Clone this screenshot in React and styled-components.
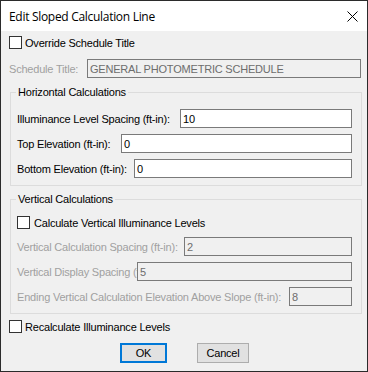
import React from 'react';
import styled, { createGlobalStyle } from 'styled-components';

const Global = createGlobalStyle`
  html, body { margin: 0; padding: 0; background: #f0f0f0; }
  body { font-family: "Liberation Sans", Arial, sans-serif; }
`;

const Window = styled.div`
  box-sizing: border-box;
  width: 368px;
  height: 372px;
  border: 1px solid #2b2b2b;
  background: #f0f0f0;
  display: flex;
  flex-direction: column;
  font-family: "Liberation Sans", Arial, sans-serif;
  font-size: 11px;
  letter-spacing: -0.2px;
  color: #000;
  overflow: hidden;
`;

const TitleBar = styled.div`
  flex: none;
  height: 30px;
  background: #fff;
  display: flex;
  align-items: center;
  justify-content: space-between;
  padding-left: 8px;
`;

const Title = styled.div`
  font-family: "Open Sans", "Noto Sans", sans-serif;
  font-size: 12px;
  letter-spacing: -0.3px;
  color: #000;
`;

const CloseButton = styled.div`
  width: 30px;
  height: 30px;
  display: flex;
  align-items: center;
  justify-content: center;
`;

const Body = styled.div`
  display: flex;
  flex-direction: column;
  padding: 0 5px 0 8px;
`;

const CheckRow = styled.label`
  display: flex;
  align-items: center;
  gap: ${p => p.$gap ?? 3}px;
  height: 13px;
  margin-top: ${p => p.$mt ?? 0}px;
  margin-bottom: ${p => p.$mb ?? 0}px;
  white-space: nowrap;
`;

const Box = styled.span`
  box-sizing: border-box;
  flex: none;
  width: 13px;
  height: 13px;
  border: 1px solid #333;
  background: #fff;
`;

const FieldRow = styled.div`
  display: flex;
  align-items: center;
  height: 19px;
  margin-top: ${p => p.$mt ?? 0}px;
`;

const Label = styled.span`
  flex: none;
  width: ${p => p.$w}px;
  white-space: nowrap;
  color: ${p => (p.$disabled ? '#a0a0a0' : '#000')};
`;

const Input = styled.input`
  box-sizing: border-box;
  flex: 1;
  min-width: 0;
  height: 19px;
  margin: 0 ${p => p.$mr ?? 0}px 0 0;
  padding: 0 0 0 2px;
  border: 1px solid #7a7a7a;
  border-radius: 0;
  outline: none;
  background: ${p => (p.$disabled ? '#f0f0f0' : '#fff')};
  color: ${p => (p.$disabled ? '#6d6d6d' : '#000')};
  font: inherit;
  letter-spacing: inherit;
`;

const Group = styled.fieldset`
  display: flex;
  flex-direction: column;
  gap: 6px;
  min-width: 0;
  margin: ${p => p.$mt}px 0 0 1px;
  padding: 10px 9px 7px 6px;
  border: 1px solid #dcdcdc;
`;

const Legend = styled.legend`
  height: 13px;
  line-height: 13px;
  padding: 0 2px;
  margin-left: -1px;
  color: #000;
`;

const ButtonRow = styled.div`
  display: flex;
  justify-content: center;
  gap: 30px;
  margin: 10px 2px 0 0;
`;

const Button = styled.button`
  box-sizing: border-box;
  width: ${p => p.$w}px;
  height: 20px;
  padding: 0;
  background: #e1e1e1;
  border: ${p => (p.$primary ? '2px solid #0078d7' : '1px solid #adadad')};
  border-radius: 0;
  color: #000;
  font: inherit;
  letter-spacing: inherit;
`;

const CloseIcon = () => (
  <svg width="11" height="11" viewBox="0 0 11 11">
    <path d="M0.5 0.5 L10.5 10.5 M10.5 0.5 L0.5 10.5" stroke="#000" strokeWidth="1" fill="none" />
  </svg>
);

export default function App() {
  return (
    <>
      <Global />
      <Window>
        <TitleBar>
          <Title>Edit Sloped Calculation Line</Title>
          <CloseButton><CloseIcon /></CloseButton>
        </TitleBar>
        <Body>
          <CheckRow $mt={5}><Box />Override Schedule Title</CheckRow>
          <FieldRow $mt={10}>
            <Label $w={78} $disabled>Schedule Title:</Label>
            <Input $disabled $mr={1} readOnly value="GENERAL PHOTOMETRIC SCHEDULE" />
          </FieldRow>

          <Group $mt={8}>
            <Legend>Horizontal Calculations</Legend>
            <FieldRow>
              <Label $w={163}>Illuminance Level Spacing (ft-in):</Label>
              <Input readOnly value="10" />
            </FieldRow>
            <FieldRow>
              <Label $w={104}>Top Elevation (ft-in):</Label>
              <Input readOnly value="0" />
            </FieldRow>
            <FieldRow>
              <Label $w={117}>Bottom Elevation (ft-in):</Label>
              <Input readOnly value="0" />
            </FieldRow>
          </Group>

          <Group $mt={7}>
            <Legend>Vertical Calculations</Legend>
            <CheckRow $gap={4} $mb={2}><Box />Calculate Vertical Illuminance Levels</CheckRow>
            <FieldRow>
              <Label $w={167} $disabled>Vertical Calculation Spacing (ft-in):</Label>
              <Input $disabled readOnly value="2" />
            </FieldRow>
            <FieldRow>
              <Label $w={120} $disabled>Vertical Display Spacing (ft-in):</Label>
              <Input $disabled readOnly value="5" />
            </FieldRow>
            <FieldRow>
              <Label $w={272} $disabled>Ending Vertical Calculation Elevation Above Slope (ft-in):</Label>
              <Input $disabled readOnly value="8" />
            </FieldRow>
          </Group>

          <CheckRow $mt={6}><Box />Recalculate Illuminance Levels</CheckRow>
          <ButtonRow>
            <Button $primary $w={47}>OK</Button>
            <Button $w={52}>Cancel</Button>
          </ButtonRow>
        </Body>
      </Window>
    </>
  );
}
